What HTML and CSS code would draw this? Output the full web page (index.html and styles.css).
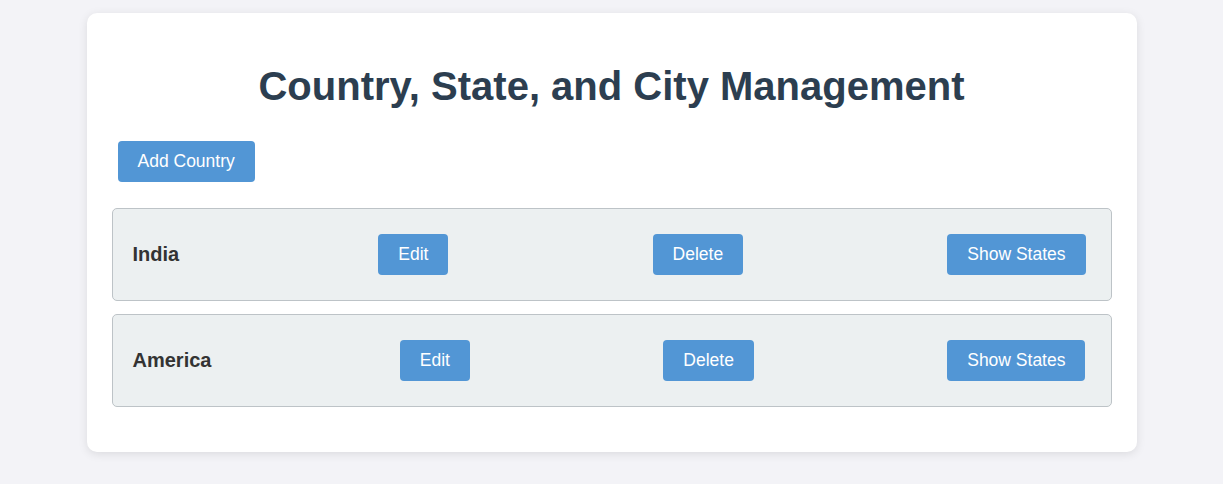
FILE: index.html
```html
<!DOCTYPE html>
<html lang="en">
<head>
<meta charset="utf-8">
<title>Country, State, and City Management</title>
<link rel="stylesheet" href="styles.css">
</head>
<body>
<div class="card">
  <h1 class="title">Country, State, and City Management</h1>
  <div class="toolbar">
    <button class="btn">Add Country</button>
  </div>
  <div class="row">
    <span class="name">India</span>
    <button class="btn">Edit</button>
    <button class="btn">Delete</button>
    <button class="btn">Show States</button>
  </div>
  <div class="row">
    <span class="name">America</span>
    <button class="btn">Edit</button>
    <button class="btn">Delete</button>
    <button class="btn">Show States</button>
  </div>
</div>
</body>
</html>
```
FILE: styles.css
```css
html, body {
  margin: 0;
  padding: 0;
}
body {
  background: #f3f3f7;
  font-family: "Liberation Sans", Arial, sans-serif;
  padding-top: 13px;
  min-height: 484px;
  box-sizing: border-box;
}
.card {
  width: 1000px;
  margin: 0 auto;
  background: #ffffff;
  padding: 25px 25px 32px;
  border-radius: 10px;
  box-shadow: 0 2px 10px rgba(0, 0, 0, 0.1);
}
.title {
  margin: 0;
  padding: 25px 0 27px;
  text-align: center;
  font-size: 40px;
  font-weight: bold;
  color: #2c3e50;
  line-height: 46px;
}
.toolbar {
  margin-bottom: 21px;
}
.btn {
  font-family: "Liberation Sans", Arial, sans-serif;
  font-size: 17.5px;
  line-height: 21px;
  color: #ffffff;
  background: #5296d5;
  border: none;
  border-radius: 4px;
  padding: 10px 20px;
  margin: 5px;
}
.toolbar .btn {
  margin-left: 6px;
}
.row {
  display: flex;
  align-items: center;
  justify-content: space-between;
  background: #ecf0f1;
  border: 1px solid #bdc3c7;
  border-radius: 5px;
  padding: 20px;
  margin-bottom: 13px;
}
.name {
  font-size: 20px;
  font-weight: bold;
  color: #333333;
}
```
